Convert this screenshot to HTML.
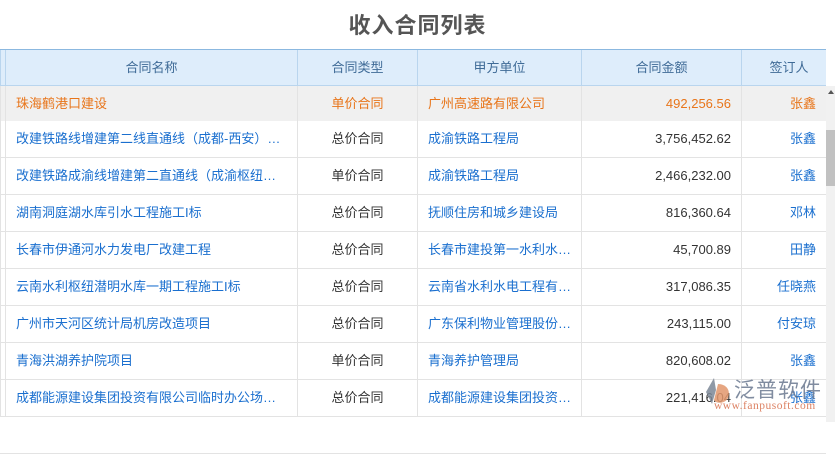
<!DOCTYPE html>
<html><head><meta charset="utf-8"><style>
*{margin:0;padding:0;box-sizing:border-box}
body{width:835px;height:422px;overflow:hidden;background:#fff;font-family:"Liberation Sans","Noto Sans CJK SC",sans-serif;font-size:13px;position:relative}
.title{position:absolute;top:8px;left:0;width:835px;text-align:center;font-size:22px;font-weight:bold;color:#555;letter-spacing:1px}
.hdr{position:absolute;top:49px;left:0;width:826px;height:37px;background:#deedfb;border-top:1px solid #8bb8e0;border-bottom:1px solid #b9d5ee}
.row{position:absolute;left:0;width:826px;height:37px;border-bottom:1px solid #e3e3e3;background:#fff}
.c{position:absolute;top:0;height:100%;line-height:35px;white-space:nowrap;overflow:hidden;border-left:1px solid #e3e3e3}
.hdr .c{border-left:1px solid #b9d5ee;color:#3f6b97;text-align:center}
.c1{left:5px;width:292px;padding-left:10px}
.c2{left:297px;width:120px;text-align:center}
.c3{left:417px;width:164px;padding-left:10px}
.c4{left:581px;width:160px;text-align:right;padding-right:10px}
.c5{left:741px;width:85px;text-align:right;padding-right:10px}
.row .c1,.row .c3,.row .c5{color:#1a6fcf}
.row .c2,.row .c4{color:#333}
.sel{background:#f0f0f0}
.sel .c{color:#e8751a!important}
.sb{position:absolute;left:826px;top:86px;width:9px;height:336px;background:#f1f1f1}
.th{position:absolute;left:826px;top:130px;width:9px;height:56px;background:#c1c1c1}
</style></head><body>
<div class="title">收入合同列表</div>
<div class="hdr"><div class="c" style="left:0;width:5px"></div><div class="c c1" style="padding:0">合同名称</div><div class="c c2">合同类型</div><div class="c c3" style="padding:0">甲方单位</div><div class="c c4" style="text-align:center;padding:0">合同金额</div><div class="c c5" style="text-align:center;padding:0 0 0 10px">签订人</div></div>

<div class="row sel" style="top:86px"><div class="c" style="left:0;width:5px"></div><div class="c c1">珠海鹤港口建设</div><div class="c c2">单价合同</div><div class="c c3">广州高速路有限公司</div><div class="c c4">492,256.56</div><div class="c c5">张鑫</div></div>
<div class="row" style="top:121px"><div class="c" style="left:0;width:5px"></div><div class="c c1">改建铁路线增建第二线直通线（成都-西安）…</div><div class="c c2">总价合同</div><div class="c c3">成渝铁路工程局</div><div class="c c4">3,756,452.62</div><div class="c c5">张鑫</div></div>
<div class="row" style="top:158px"><div class="c" style="left:0;width:5px"></div><div class="c c1">改建铁路成渝线增建第二直通线（成渝枢纽…</div><div class="c c2">单价合同</div><div class="c c3">成渝铁路工程局</div><div class="c c4">2,466,232.00</div><div class="c c5">张鑫</div></div>
<div class="row" style="top:195px"><div class="c" style="left:0;width:5px"></div><div class="c c1">湖南洞庭湖水库引水工程施工I标</div><div class="c c2">总价合同</div><div class="c c3">抚顺住房和城乡建设局</div><div class="c c4">816,360.64</div><div class="c c5">邓林</div></div>
<div class="row" style="top:232px"><div class="c" style="left:0;width:5px"></div><div class="c c1">长春市伊通河水力发电厂改建工程</div><div class="c c2">总价合同</div><div class="c c3">长春市建投第一水利水…</div><div class="c c4">45,700.89</div><div class="c c5">田静</div></div>
<div class="row" style="top:269px"><div class="c" style="left:0;width:5px"></div><div class="c c1">云南水利枢纽潜明水库一期工程施工I标</div><div class="c c2">总价合同</div><div class="c c3">云南省水利水电工程有…</div><div class="c c4">317,086.35</div><div class="c c5">任晓燕</div></div>
<div class="row" style="top:306px"><div class="c" style="left:0;width:5px"></div><div class="c c1">广州市天河区统计局机房改造项目</div><div class="c c2">总价合同</div><div class="c c3">广东保利物业管理股份…</div><div class="c c4">243,115.00</div><div class="c c5">付安琼</div></div>
<div class="row" style="top:343px"><div class="c" style="left:0;width:5px"></div><div class="c c1">青海洪湖养护院项目</div><div class="c c2">单价合同</div><div class="c c3">青海养护管理局</div><div class="c c4">820,608.02</div><div class="c c5">张鑫</div></div>
<div class="row" style="top:380px"><div class="c" style="left:0;width:5px"></div><div class="c c1">成都能源建设集团投资有限公司临时办公场…</div><div class="c c2">总价合同</div><div class="c c3">成都能源建设集团投资…</div><div class="c c4">221,416.04</div><div class="c c5">张鑫</div></div>
<div class="row" style="top:417px"></div>

<div class="sb"></div><div class="th"></div>
<div style="position:absolute;left:828px;top:90px;width:0;height:0;border-left:3px solid transparent;border-right:3px solid transparent;border-bottom:4px solid #555"></div>

<svg style="position:absolute;left:704px;top:376px" width="28" height="30" viewBox="0 0 28 30"><path d="M10 2 L2 16 L8 28 L12 14 Z" fill="#7b8797" opacity="0.85"/><path d="M14 8 C22 8 27 14 24 22 C21 28 12 28 10 24 Z" fill="#e2966c" opacity="0.85"/></svg>
<div style="position:absolute;left:734px;top:374px;font-size:21px;color:#6a7890;opacity:.85;letter-spacing:1px;font-family:'Noto Sans CJK SC',sans-serif">泛普软件</div>
<div style="position:absolute;left:714px;top:400px;font-size:11.5px;color:#d76d4a;opacity:.85;font-family:'Liberation Serif',serif;letter-spacing:.5px">www.fanpusoft.com</div>
</body></html>
